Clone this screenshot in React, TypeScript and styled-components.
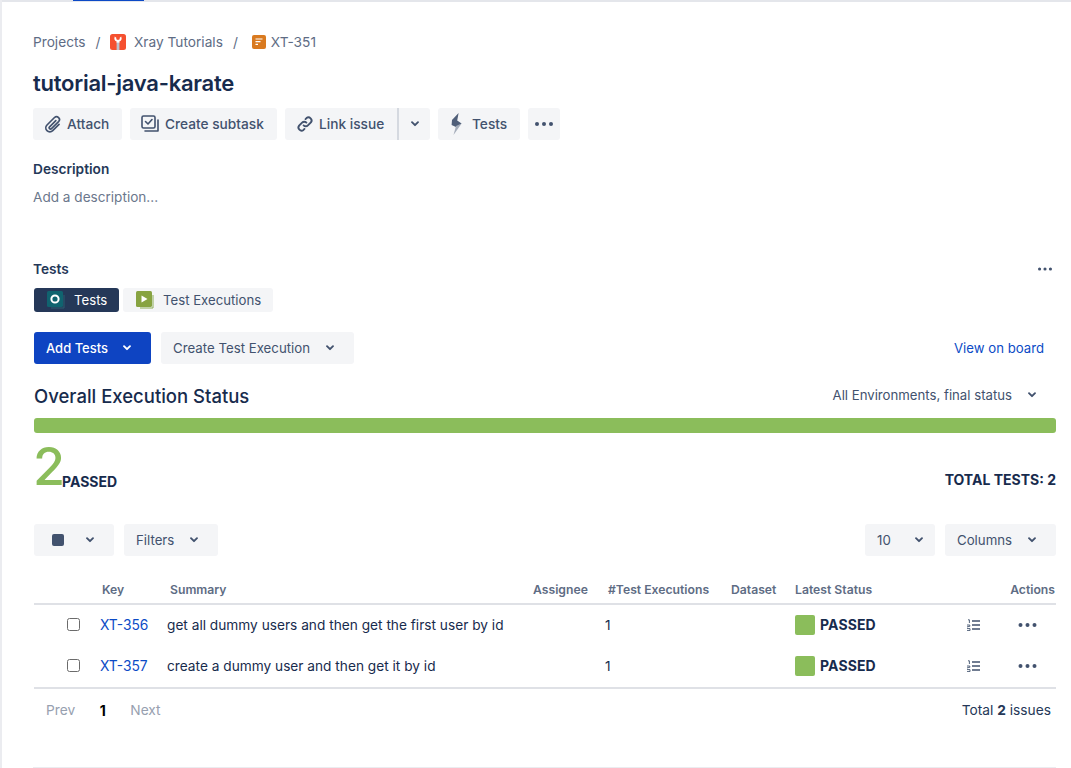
import React from "react";
import styled, { createGlobalStyle } from "styled-components";

const Global = createGlobalStyle`
  html, body { margin: 0; padding: 0; background: #fff; }
  body { font-family: Inter, "Liberation Sans", sans-serif; color: #172b4d; font-size: 13.7px; overflow: hidden; }
  * { box-sizing: border-box; }
`;

const Page = styled.div`
  width: 1071px; height: 768px; position: relative; overflow: hidden;
  border-left: 2px solid #ebecf0; padding: 0 15px 0 31px;
  display: flex; flex-direction: column;
`;
const TopEdge = styled.div`
  height: 2px; margin: 0 -15px 0 -31px; background: #e4e6eb; display: flex; padding-left: 71px; flex: none;
`;
const TopTab = styled.div`width: 71px; height: 1px; background: #0c49c6;`;
const Crumbs = styled.nav`
  display: flex; align-items: center; height: 20px; margin-top: 30px; color: #5e6c84; font-size: 13.7px; line-height: 20px;
`;
const Sep = styled.span<{ $l: number; $r: number }>`margin: 0 ${p => p.$r}px 0 ${p => p.$l}px;`;
const CrumbText = styled.span<{ $l?: number }>`margin-left: ${p => p.$l ?? 0}px;`;
const Title = styled.h1`
  margin: 15px 0 0; font-size: 22px; line-height: 32px; font-weight: 600; color: #172b4d; letter-spacing: -0.25px;
`;
const Toolbar = styled.div`display: flex; margin-top: 9px; gap: 8px; height: 32px;`;
const Btn = styled.button<{ $w: number; $pad?: number; $gap?: number }>`
  width: ${p => p.$w}px; height: 32px; border: 0; border-radius: 3px; background: #f4f5f7; color: #42526e;
  font: 500 13.7px/20px Inter, sans-serif; display: flex; align-items: center; justify-content: flex-start;
  padding: 0 0 0 ${p => p.$pad ?? 11}px; gap: ${p => p.$gap ?? 5}px; flex: none;
`;
const Split = styled.div`display: flex; gap: 0;`;
const LeftBtn = styled(Btn)`border-radius: 3px 0 0 3px;`;
const RightBtn = styled(Btn)`border-radius: 0 3px 3px 0; border-left: 2px solid #d5d9e0; justify-content: center; padding: 0;`;
const Label = styled.div<{ $t: number }>`
  margin-top: ${p => p.$t}px; font-size: 13.7px; line-height: 20px; font-weight: 600; color: #253858;
`;
const Placeholder = styled.div`margin-top: 8px; color: #6b778c; font-size: 13.6px; line-height: 20px;`;
const SectionHead = styled.div`display: flex; justify-content: space-between; align-items: center; margin-top: 52px; height: 20px; padding-right: 4px;`;
const SectionLabel = styled.div`font-size: 13.7px; line-height: 20px; font-weight: 600; color: #253858;`;
const Inner = styled.div`padding-left: 1px; display: flex; flex-direction: column;`;
const Tabs = styled.div`display: flex; gap: 4px; margin-top: 9px; height: 24px;`;
const Tab = styled.div<{ $active?: boolean; $w: number }>`
  width: ${p => p.$w}px; height: 24px; border-radius: 3px; display: flex; align-items: center; padding-left: 13px; gap: 9px;
  background: ${p => (p.$active ? "#253858" : "#f4f5f7")}; color: ${p => (p.$active ? "#fff" : "#42526e")};
  font-size: 13.2px;
`;
const ActionRow = styled.div`display: flex; align-items: center; gap: 10px; margin-top: 20px; height: 32px;`;
const Primary = styled.button`
  width: 117px; height: 32px; border: 0; border-radius: 3px; background: #0e44c2; color: #fff;
  font: 500 13px/20px Inter, sans-serif; display: flex; align-items: center; padding: 0 0 0 12px; gap: 14px;
`;
const Secondary = styled.button<{ $w: number; $between?: boolean; $right?: number }>`
  width: ${p => p.$w}px; height: 32px; border: 0; border-radius: 3px; background: #f4f5f7; color: #42526e;
  font: 400 13.25px/20px Inter, sans-serif; display: flex; align-items: center; padding: 0 ${p => p.$right ?? 11}px 0 12px; gap: 15px; flex: none;
  justify-content: ${p => (p.$between ? "space-between" : "flex-start")};
`;
const LinkBtn = styled.a`margin-left: auto; margin-right: 12px; color: #0b4bc6; font-size: 13.2px;`;
const OverallRow = styled.div`display: flex; align-items: center; justify-content: space-between; margin-top: 16px; height: 32px;`;
const OverallTitle = styled.h2`margin: 0; font-size: 18.5px; font-weight: 500; line-height: 28px; color: #172b4d;`;
const EnvSelect = styled.div`display: flex; align-items: center; gap: 15px; color: #42526e; font-size: 13.2px; margin-right: 19px; padding-bottom: 2px;`;
const Bar = styled.div`height: 15px; margin-top: 6px; background: #8bbd5b; border-radius: 3px;`;
const Summary = styled.div`display: flex; align-items: flex-end; justify-content: space-between; margin-top: 8px; height: 52px;`;
const BigWrap = styled.div`display: flex; align-items: flex-end;`;
const BigNumber = styled.span`font-size: 52px; line-height: 52px; font-weight: 500; color: #8bbd5b; margin-left: -1px; margin-right: -3px; height: 52px;`;
const BigLabel = styled.span`font-size: 14px; font-weight: 700; color: #172b4d; line-height: 20px; margin-bottom: 1px;`;
const Total = styled.span`font-size: 14px; font-weight: 700; color: #172b4d; line-height: 20px; margin-bottom: 3px;`;
const FilterRow = styled.div`display: flex; gap: 10px; margin-top: 31px; height: 32px;`;
const Spacer = styled.div`flex: 1;`;
const SwatchWrap = styled.span`display: flex; margin-left: 6px;`;
const Swatch = styled.span`width: 12px; height: 12px; border-radius: 2px; background: #42526e;`;
const cols = "66px 67px 366px 72px 123px 67px 170px 91px";
const HeadRow = styled.div`
  display: grid; grid-template-columns: ${cols}; margin-top: 24px; height: 25px; border-bottom: 2px solid #dfe1e6;
  font-size: 12.2px; font-weight: 600; color: #5e6c84; line-height: 20px; align-items: start;
`;
const HeadCell = styled.div<{ $right?: boolean; $pad?: number }>`
  padding-left: ${p => p.$pad ?? 0}px; padding-right: ${p => (p.$right ? 1 : 0)}px; text-align: ${p => (p.$right ? "right" : "left")}; white-space: nowrap;
`;
const Row = styled.div`
  display: grid; grid-template-columns: ${cols}; height: 41px; align-items: center; font-size: 13.7px; color: #172b4d; position: relative; top: -1px;
`;
const Check = styled.span`
  justify-self: end; margin-right: 20px; width: 13px; height: 13px; border: 1px solid #6b6b6b; border-radius: 2.5px; background: #fff;
`;
const KeyLink = styled.a`color: #0b4bc6; font-size: 13.8px;`;
const StatusCell = styled.div`display: flex; align-items: center; gap: 5px; font-weight: 700; font-size: 14px; color: #172b4d; letter-spacing: 0.12px;`;
const Square = styled.span`width: 20px; height: 20px; border-radius: 2px; background: #8bbd5b;`;
const Cell = styled.div<{ $pad?: number }>`padding-left: ${p => p.$pad ?? 0}px; white-space: nowrap;`;
const Actions = styled.div`display: flex; align-items: center; gap: 38px; padding-left: 2px;`;
const Foot = styled.div`
  display: flex; justify-content: space-between; align-items: center; border-top: 2px solid #dfe1e6; height: 44px; padding: 0 5px 0 12px; font-size: 13.75px;
`;
const Pager = styled.div`display: flex; gap: 24.5px; color: #97a0af; align-items: center;`;
const Current = styled.span`color: #000; font-weight: 700; font-size: 14px;`;
const FootNote = styled.span`color: #253858; b { font-weight: 700; }`;
const BottomLine = styled.div`position: absolute; left: 31px; right: 15px; bottom: 0; height: 1px; background: #ebecf0;`;

const Chevron = ({ color = "#42526e" }: { color?: string }) => (
  <svg width="10" height="8" viewBox="0 0 10 8" fill="none">
    <path d="M2 2.2 L5 5.2 L8 2.2" stroke={color} strokeWidth="1.9" strokeLinecap="round" strokeLinejoin="round" />
  </svg>
);
const Dots = ({ w = 18, color = "#42526e" }: { w?: number; color?: string }) => (
  <svg width={w} height="4" viewBox="0 0 18 4"><circle cx="2" cy="2" r="2" fill={color} /><circle cx="9" cy="2" r="2" fill={color} /><circle cx="16" cy="2" r="2" fill={color} /></svg>
);
const ProjectIcon = () => (
  <svg width="16" height="16" viewBox="0 0 16 16">
    <rect width="16" height="16" rx="2.5" fill="#f5502f" />
    <path d="M4.8 2.4 C3.8 4.6 4.4 6.8 6.6 7.6 V9 H9.4 V7.6 C11.6 6.8 12.2 4.6 11.2 2.4 L9.7 3.8 V5.2 L8 6 L6.3 5.2 V3.8 Z" fill="#fff" />
    <rect x="6.6" y="8.6" width="2.8" height="7.4" fill="#b9c4cf" />
  </svg>
);
const IssueIcon = () => (
  <svg width="14" height="14" viewBox="0 0 14 14">
    <rect width="14" height="14" rx="2" fill="#d97a20" />
    <path d="M3.5 4h7M3.5 6.7h5M3.5 9.4h2.5" stroke="#fff" strokeWidth="1.2" />
  </svg>
);
const Attach = () => (
  <svg width="18" height="18" viewBox="0 0 18 18" fill="none" stroke="#42526e" strokeWidth="1.7" strokeLinecap="round" strokeLinejoin="round">
    <path d="M11.8 5.4 L5.6 11.6 a1.3 1.3 0 0 0 1.9 1.9 L14.6 6.4 a2.9 2.9 0 0 0 -4.1 -4.1 L3 9.8 a4 4 0 0 0 5.7 5.7 L15 9.2" transform="translate(0 0.2)" />
  </svg>
);
const Subtask = () => (
  <svg width="19" height="18" viewBox="0 0 19 18" fill="none" stroke="#42526e" strokeWidth="1.6" strokeLinejoin="round" strokeLinecap="round">
    <rect x="1" y="1" width="13" height="12" rx="1.5" />
    <path d="M4.5 6.5 L7 9 L11 4.5" />
    <path d="M17 5 V16 H4" />
  </svg>
);
const LinkIcon = () => (
  <svg width="18" height="18" viewBox="0 0 18 18" fill="none" stroke="#42526e" strokeWidth="1.9" strokeLinecap="round">
    <path d="M7.6 10.4 a3 3 0 0 0 4.3 0 l3-3 a3.1 3.1 0 0 0 -4.4 -4.3 l-1 1" />
    <path d="M10.4 7.6 a3 3 0 0 0 -4.3 0 l-3 3 a3.1 3.1 0 0 0 4.4 4.3 l1 -1" />
  </svg>
);
const Bolt = () => (
  <svg width="16" height="24" viewBox="0 0 16 24">
    <path d="M9.6 1 L3 8 L2.6 13 L7.5 15.2 L12.6 11.5 L8.2 8.5 Z" fill="#505f79" />
    <path d="M12.6 11.5 L4.5 23 L7 14z" fill="#a5adba" />
  </svg>
);
const TestsIcon = () => (
  <svg width="18" height="18" viewBox="0 0 18 18">
    <path d="M17 4 V17 H4" fill="none" stroke="#2a5f70" strokeWidth="1" />
    <rect width="16" height="16" rx="1.5" fill="#10636f" />
    <circle cx="8" cy="8" r="3.6" fill="none" stroke="#fff" strokeWidth="2" />
  </svg>
);
const ExecIcon = () => (
  <svg width="18" height="18" viewBox="0 0 18 18">
    <path d="M17 4 V17 H4" fill="none" stroke="#8bad57" strokeWidth="1" />
    <rect width="16" height="16" rx="1.5" fill="#87a341" />
    <path d="M5.5 4.5 L11.5 8 L5.5 11.5z" fill="#fff" />
  </svg>
);
const ListIcon = () => (
  <svg width="13" height="12" viewBox="0 0 13 12" fill="none">
    <path d="M5 2h8M5 6h8M5 10h8" stroke="#42526e" strokeWidth="1.4" />
    <path d="M1 .8h1.4V4M0 6h2.8v1.4H.6v1M0 9.6h3V11.6H0" stroke="#42526e" strokeWidth="0.9" />
  </svg>
);

const rows = [
  { key: "XT-356", text: "get all dummy users and then get the first user by id" },
  { key: "XT-357", text: "create a dummy user and then get it by id" },
];

export default function App() {
  return (
    <Page>
      <Global />
      <TopEdge><TopTab /></TopEdge>
      <Crumbs>
        <span>Projects</span>
        <Sep $l={10} $r={9}>/</Sep>
        <ProjectIcon />
        <CrumbText $l={8.5}>Xray Tutorials</CrumbText>
        <Sep $l={10} $r={14}>/</Sep>
        <IssueIcon />
        <CrumbText $l={5}>XT-351</CrumbText>
      </Crumbs>
      <Title>tutorial-java-karate</Title>
      <Toolbar>
        <Btn $w={89}><Attach />Attach</Btn>
        <Btn $w={147}><Subtask />Create subtask</Btn>
        <Split>
          <LeftBtn $w={112}><LinkIcon />Link issue</LeftBtn>
          <RightBtn $w={33}><Chevron /></RightBtn>
        </Split>
        <Btn $w={82} $gap={7}><Bolt />Tests</Btn>
        <Btn $w={32} $pad={7}><Dots /></Btn>
      </Toolbar>
      <Label $t={19}>Description</Label>
      <Placeholder>Add a description...</Placeholder>
      <SectionHead>
        <SectionLabel>Tests</SectionLabel>
        <Dots w={14} />
      </SectionHead>
      <Inner>
        <Tabs>
          <Tab $active $w={85}><TestsIcon />Tests</Tab>
          <Tab $w={150}><ExecIcon />Test Executions</Tab>
        </Tabs>
        <ActionRow>
          <Primary>Add Tests<Chevron color="#fff" /></Primary>
          <Secondary $w={193}>Create Test Execution<Chevron /></Secondary>
          <LinkBtn>View on board</LinkBtn>
        </ActionRow>
        <OverallRow>
          <OverallTitle>Overall Execution Status</OverallTitle>
          <EnvSelect>All Environments, final status<Chevron /></EnvSelect>
        </OverallRow>
        <Bar />
        <Summary>
          <BigWrap><BigNumber>2</BigNumber><BigLabel>PASSED</BigLabel></BigWrap>
          <Total>TOTAL TESTS: 2</Total>
        </Summary>
        <FilterRow>
          <Secondary $w={80} $between $right={19}><SwatchWrap><Swatch /></SwatchWrap><Chevron /></Secondary>
          <Secondary $w={94}>Filters<Chevron /></Secondary>
          <Spacer />
          <Secondary $w={70} $between>10<Chevron /></Secondary>
          <Secondary $w={111}>Columns<Chevron /></Secondary>
        </FilterRow>
        <HeadRow>
          <div />
          <HeadCell $pad={2}>Key</HeadCell>
          <HeadCell $pad={3}>Summary</HeadCell>
          <HeadCell>Assignee</HeadCell>
          <HeadCell $pad={3}>#Test Executions</HeadCell>
          <HeadCell $pad={3}>Dataset</HeadCell>
          <HeadCell>Latest Status</HeadCell>
          <HeadCell $right>Actions</HeadCell>
        </HeadRow>
        {rows.map(r => (
          <Row key={r.key}>
            <Check />
            <KeyLink>{r.key}</KeyLink>
            <Cell>{r.text}</Cell>
            <div />
            <Cell>1</Cell>
            <div />
            <StatusCell><Square />PASSED</StatusCell>
            <Actions><ListIcon /><Dots w={19} /></Actions>
          </Row>
        ))}
        <Foot>
          <Pager><span>Prev</span><Current>1</Current><span>Next</span></Pager>
          <FootNote>Total <b>2</b> issues</FootNote>
        </Foot>
      </Inner>
      <BottomLine />
    </Page>
  );
}
